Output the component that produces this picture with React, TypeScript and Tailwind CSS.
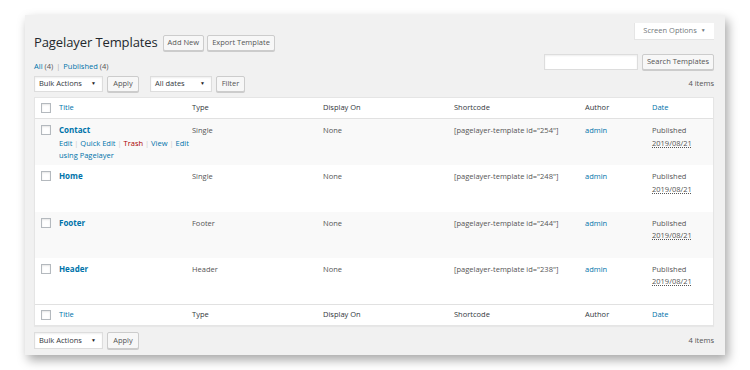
import React from "react";

const rows = [
  { title: "Contact", type: "Single", id: "254", actions: true },
  { title: "Home", type: "Single", id: "248" },
  { title: "Footer", type: "Footer", id: "244" },
  { title: "Header", type: "Header", id: "238" },
];

const cols = "grid grid-cols-[24px_133px_131px_131px_131px_67px_1fr]";

const Checkbox = () => (
  <span className="block w-[10px] h-[10px] ml-[6px] bg-white border border-[#b4b9be] shadow-[inset_0_1px_2px_rgba(0,0,0,0.1)]" />
);

const Button = ({ children, className = "" }: { children: React.ReactNode; className?: string }) => (
  <button
    className={`h-[16px] px-[4px] bg-[#f7f7f7] border border-[#ccc] rounded-[2px] shadow-[0_1px_0_#ccc] text-[7.5px] text-[#555] leading-none whitespace-nowrap ${className}`}
  >
    {children}
  </button>
);

const Select = ({ label, width }: { label: string; width: string }) => (
  <div className={`${width} h-[16px] flex items-center justify-between pl-[4px] pr-[6px] bg-white border border-[#ddd] shadow-[inset_0_1px_2px_rgba(0,0,0,0.07)] text-[7.5px] text-[#32373c]`}>
    <span>{label}</span>
    <span className="text-[5px] text-[#222]">▼</span>
  </div>
);

const HeadRow = ({ top }: { top?: boolean }) => (
  <div className={`${cols} h-[21px] items-center text-[7.5px] text-[#32373c] ${top ? "border-b" : "border-t"} border-[#e1e1e1]`}>
    <Checkbox />
    <span className="text-[#0073aa]">Title</span>
    <span>Type</span>
    <span>Display On</span>
    <span>Shortcode</span>
    <span>Author</span>
    <span className="text-[#0073aa]">Date</span>
  </div>
);

export default function App() {
  return (
    <div className="w-[750px] h-[370px] bg-white pt-[15px] font-['Open_Sans',sans-serif]">
      <div className="ml-[25px] w-[700px] h-[340px] bg-[#f1f1f1] shadow-[3px_5px_10px_rgba(0,0,0,0.35)] pl-[9px] pr-[11px]">
        <div className="flex justify-between items-start pt-[8px] h-[35px]">
          <div className="flex items-center mt-[12px] h-[15px]">
            <h1 className="text-[13px] tracking-[-0.1px] text-[#23282d] mr-[5px] leading-none">Pagelayer Templates</h1>
            <Button className="text-[#0073aa] mr-[3px]">Add New</Button>
            <Button className="text-[#0073aa]">Export Template</Button>
          </div>
          <div className="h-[17px] w-[80px] flex items-center justify-center gap-[4px] bg-white border-l border-b border-[#e5e5e5] text-[7.5px] text-[#72777c]">
            Screen Options <span className="text-[5px]">▼</span>
          </div>
        </div>

        <div className="flex justify-between items-start mt-[4px] h-[16px]">
          <div className="mt-[7px] text-[7.5px] leading-[10px] text-[#aaa]">
            <span className="text-[#0073aa]">All</span> <span className="text-[#555]">(4)</span>
            <span className="mx-[3px]">|</span>
            <span className="text-[#0073aa]">Published</span> <span className="text-[#555]">(4)</span>
          </div>
          <div className="flex gap-[4px]">
            <div className="w-[94px] h-[16px] bg-white border border-[#ddd] shadow-[inset_0_1px_2px_rgba(0,0,0,0.07)]" />
            <Button className="w-[72px]">Search Templates</Button>
          </div>
        </div>

        <div className="flex justify-between items-center mt-[6px] h-[16px]">
          <div className="flex items-center">
            <Select label="Bulk Actions" width="w-[69px]" />
            <Button className="w-[32px] ml-[4px]">Apply</Button>
            <Select label="All dates" width="w-[62px] ml-[11px]" />
            <Button className="w-[29px] ml-[4px]">Filter</Button>
          </div>
          <span className="text-[7.5px] text-[#555]">4 items</span>
        </div>

        <div className="mt-[5px] bg-white border border-[#e5e5e5] shadow-[0_1px_1px_rgba(0,0,0,0.04)]">
          <HeadRow top />
          {rows.map((r, i) => (
            <div
              key={r.id}
              className={`${cols} h-[46.25px] pt-[5px] items-start text-[7.5px] leading-[12px] text-[#555] ${i % 2 === 0 ? "bg-[#f9f9f9]" : "bg-white"}`}
            >
              <div className="pt-[1px]"><Checkbox /></div>
              <div>
                <div className="font-bold text-[#0073aa] text-[8px] mb-[2px]">{r.title}</div>
                {r.actions && (
                  <div className="text-[7.5px] leading-[11.6px] text-[#ccc] whitespace-nowrap">
                    <span className="text-[#0073aa]">Edit</span> | <span className="text-[#0073aa]">Quick Edit</span> |{" "}
                    <span className="text-[#a00]">Trash</span> | <span className="text-[#0073aa]">View</span> |{" "}
                    <span className="text-[#0073aa]">Edit</span>
                    <br />
                    <span className="text-[#0073aa]">using Pagelayer</span>
                  </div>
                )}
              </div>
              <span>{r.type}</span>
              <span>None</span>
              <span>[pagelayer-template id="{r.id}"]</span>
              <span className="text-[#0073aa]">admin</span>
              <div className="leading-[12.5px]">
                <div>Published</div>
                <div className="underline decoration-dotted decoration-[#555] underline-offset-1">2019/08/21</div>
              </div>
            </div>
          ))}
          <HeadRow />
        </div>

        <div className="flex justify-between items-center mt-[6px] h-[17px]">
          <div className="flex items-center">
            <Select label="Bulk Actions" width="w-[69px] h-[17px]" />
            <Button className="w-[32px] ml-[4px] h-[17px]">Apply</Button>
          </div>
          <span className="text-[7.5px] text-[#555]">4 items</span>
        </div>
      </div>
    </div>
  );
}
